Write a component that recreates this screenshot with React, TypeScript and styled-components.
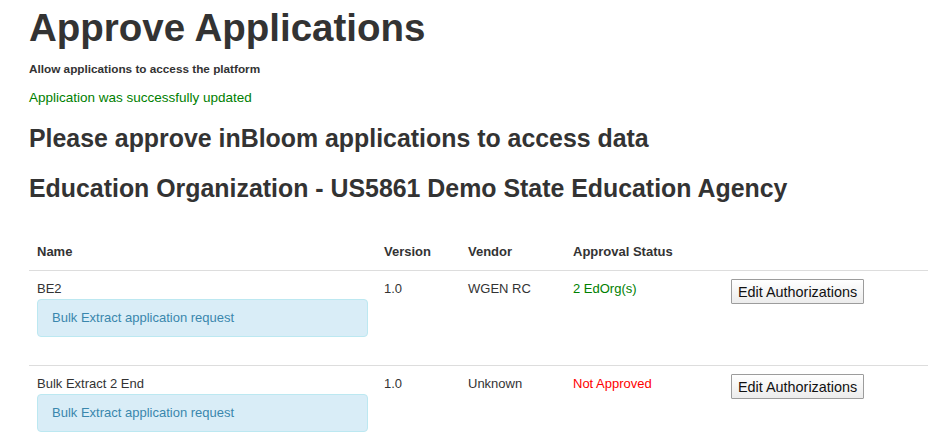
import React from "react";
import styled, { createGlobalStyle } from "styled-components";

const GlobalStyle = createGlobalStyle`
  html, body {
    margin: 0;
    padding: 0;
    background: #ffffff;
  }
  body {
    font-family: "Liberation Sans", Arial, Helvetica, sans-serif;
    font-size: 13px;
    line-height: 20px;
    color: #333333;
  }
`;

const Page = styled.div`
  padding: 0 21px 0 29px;
`;

const Title = styled.h1`
  margin: 8px 0 0;
  font-size: 38.5px;
  line-height: 40px;
  font-weight: bold;
  color: #333333;
`;

const Subtitle = styled.div`
  margin: 12px 0 0;
  font-size: 11.75px;
  line-height: 18px;
  font-weight: bold;
  color: #333333;
`;

const Notice = styled.p`
  margin: 10px 0 0;
  font-size: 13.5px;
  line-height: 20px;
  color: #008000;
`;

const Heading = styled.h3`
  margin: 10px 0;
  font-size: 24.9px;
  line-height: 40px;
  font-weight: bold;
  color: #333333;
`;

const Table = styled.table`
  margin-top: 26px;
  width: 899px;
  border-collapse: collapse;
  border-spacing: 0;
  table-layout: fixed;
`;

const HeadCell = styled.th<{ $w?: number }>`
  width: ${(p) => (p.$w ? `${p.$w}px` : "auto")};
  padding: 8px;
  text-align: left;
  font-size: 13px;
  line-height: 20px;
  font-weight: bold;
  vertical-align: bottom;
`;

const Row = styled.tr``;

const Cell = styled.td`
  padding: 8px;
  border-top: 1px solid #dddddd;
  font-size: 13px;
  line-height: 20px;
  vertical-align: top;
  text-align: left;
`;

const InfoBox = styled.div`
  margin: 0 0 20px;
  padding: 8px 35px 8px 14px;
  background: #d9edf7;
  border: 1px solid #bce8f1;
  border-radius: 4px;
  color: #3a87ad;
  font-size: 13px;
  line-height: 20px;
`;

const Status = styled.span<{ $ok: boolean }>`
  color: ${(p) => (p.$ok ? "#008000" : "#ff0000")};
`;

const EditButton = styled.button`
  display: inline-flex;
  align-items: center;
  height: 25px;
  padding: 0 6px;
  border: 1px solid #9c9c9c;
  border-radius: 1px;
  background: linear-gradient(#ffffff, #ececec);
  font-family: "Liberation Sans", Arial, sans-serif;
  font-size: 14.4px;
  color: #111111;
  white-space: nowrap;
  cursor: pointer;
`;

type App_ = {
  name: string;
  description: string;
  version: string;
  vendor: string;
  status: string;
  approved: boolean;
};

const apps: App_[] = [
  {
    name: "BE2",
    description: "Bulk Extract application request",
    version: "1.0",
    vendor: "WGEN RC",
    status: "2 EdOrg(s)",
    approved: true,
  },
  {
    name: "Bulk Extract 2 End",
    description: "Bulk Extract application request",
    version: "1.0",
    vendor: "Unknown",
    status: "Not Approved",
    approved: false,
  },
];

export default function App() {
  return (
    <>
      <GlobalStyle />
      <Page>
        <Title>Approve Applications</Title>
        <Subtitle>Allow applications to access the platform</Subtitle>
        <Notice>Application was successfully updated</Notice>
        <Heading>Please approve inBloom applications to access data</Heading>
        <Heading>Education Organization - US5861 Demo State Education Agency</Heading>
        <Table>
          <thead>
            <Row>
              <HeadCell $w={331}>Name</HeadCell>
              <HeadCell $w={68}>Version</HeadCell>
              <HeadCell $w={89}>Vendor</HeadCell>
              <HeadCell $w={142}>Approval Status</HeadCell>
              <HeadCell />
            </Row>
          </thead>
          <tbody>
            {apps.map((a) => (
              <Row key={a.name}>
                <Cell>
                  {a.name}
                  <InfoBox>{a.description}</InfoBox>
                </Cell>
                <Cell>{a.version}</Cell>
                <Cell>{a.vendor}</Cell>
                <Cell>
                  <Status $ok={a.approved}>{a.status}</Status>
                </Cell>
                <Cell>
                  <EditButton>Edit Authorizations</EditButton>
                </Cell>
              </Row>
            ))}
          </tbody>
        </Table>
      </Page>
    </>
  );
}
